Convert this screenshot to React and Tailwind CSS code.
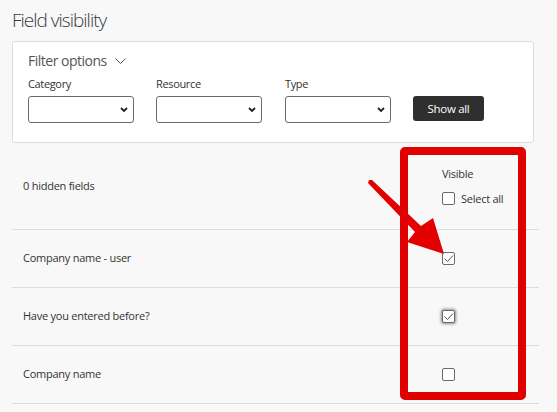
import { useState } from 'react';

const fields = [
  { id: 1, name: 'Company name - user', visible: true },
  { id: 2, name: 'Have you entered before?', visible: true, focused: true },
  { id: 3, name: 'Company name', visible: false },
];

const Checkbox = ({ checked, focused, onChange }) => (
  <button
    type="button"
    onClick={onChange}
    className={`flex h-[13px] w-[13px] shrink-0 items-center justify-center rounded-[2px] border border-[#6b6b6b] bg-white p-0 ${
      focused ? 'shadow-[0_0_3px_1px_rgba(0,0,0,0.45)]' : ''
    }`}
  >
    {checked && (
      <svg width="11" height="11" viewBox="0 0 11 11" fill="none">
        <polyline points="1.5,5.5 4.5,8.5 10,2.5" stroke="#555" strokeWidth="1" />
      </svg>
    )}
  </button>
);

const SelectBox = ({ label }) => (
  <div className="flex flex-col">
    <label className="text-[11px] leading-[15px] tracking-[-0.35px] text-[#333]">{label}</label>
    <div className="relative mt-[5px] h-[27px] w-[106px]">
      <select className="h-full w-full appearance-none rounded-[3px] border border-[#6b6b6b] bg-white" />
      <svg
        className="pointer-events-none absolute right-[6px] top-[11px]"
        width="8"
        height="5"
        viewBox="0 0 8 5"
        fill="none"
      >
        <polyline points="1,1 4,4 7,1" stroke="#222" strokeWidth="1.8" />
      </svg>
    </div>
  </div>
);

const App = () => {
  const [rows, setRows] = useState(fields);

  const toggle = (id) => {
    setRows(rows.map((r) => (r.id === id ? { ...r, visible: !r.visible } : r)));
  };

  return (
    <div className="relative min-h-screen bg-[#f8f8f8] pl-3 font-['Open_Sans',sans-serif] text-[#333]">
      <h1 className="pt-[7px] text-[19px] font-light leading-[26px] tracking-[-1px] text-[#3a3a3a]">
        Field visibility
      </h1>

      <div className="mt-[8px] mr-[23px] rounded-[3px] border border-[#dcdcdc] bg-white px-[15px] pb-[19px] pt-[9px]">
        <div className="flex items-center gap-[8px] text-[14px] leading-[20px] tracking-[-0.5px] text-[#555]">
          <span>Filter options</span>
          <svg width="11" height="6" viewBox="0 0 11 6" fill="none">
            <polyline points="0.5,0.5 5.5,5.5 10.5,0.5" stroke="#555" strokeWidth="1" />
          </svg>
        </div>
        <div className="mt-[5px] flex items-start gap-[22px]">
          <SelectBox label="Category" />
          <SelectBox label="Resource" />
          <div className="ml-[1px]">
            <SelectBox label="Type" />
          </div>
          <button
            type="button"
            className="mt-[20px] h-[25px] w-[71px] rounded-[3px] bg-[#2f2f2f] text-[11.5px] tracking-[-0.3px] text-white"
          >
            Show all
          </button>
        </div>
      </div>

      <div className="mr-[18px] text-[11px] tracking-[-0.25px]">
        <div className="flex h-[87px] items-center border-b border-[#dcdcdc]">
          <div className="flex-1 pl-[11px]">0 hidden fields</div>
          <div className="w-[97px] pb-[2px]">
            <div className="leading-[15px]">Visible</div>
            <div className="mt-[11px] flex h-[13px] items-center gap-[6px]">
              <Checkbox checked={false} onChange={() => {}} />
              <span className="leading-[15px]">Select all</span>
            </div>
          </div>
        </div>

        {rows.map((row) => (
          <div key={row.id} className="flex h-[58px] items-center border-b border-[#dcdcdc]">
            <div className="flex-1 pl-[11px]">{row.name}</div>
            <div className="w-[97px]">
              <Checkbox checked={row.visible} focused={row.focused} onChange={() => toggle(row.id)} />
            </div>
          </div>
        ))}
      </div>

      {/* annotation overlay */}
      <div className="pointer-events-none absolute left-[400px] top-[147px] h-[253px] w-[126px] rounded-[5px] border-[8px] border-[#e10000]" />
      <svg
        className="pointer-events-none absolute left-0 top-0"
        width="557"
        height="412"
        viewBox="0 0 557 412"
      >
        <polygon
          points="369,180 372,180 421,226 433,218 444,254 407,242 415,232 368,183"
          fill="#e30000"
        />
      </svg>
    </div>
  );
};

export default App;
